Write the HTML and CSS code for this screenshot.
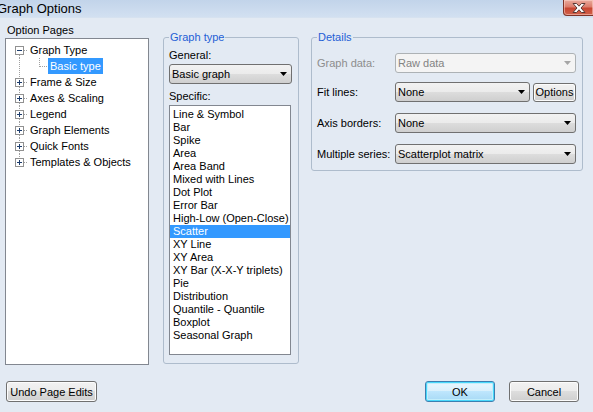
FILE: index.html
```html
<!DOCTYPE html>
<html>
<head>
<meta charset="utf-8">
<title>Graph Options</title>
<link rel="stylesheet" href="styles.css">
</head>
<body>
<div class="window">
  <div class="titlebar">
    <span class="title">Graph Options</span>
    <div class="close">
      <svg width="16" height="12" viewBox="0 0 16 12"><path d="M2 1.5 L5.5 1.5 L8 4.2 L10.5 1.5 L14 1.5 L10 6 L14 10.5 L10.5 10.5 L8 7.8 L5.5 10.5 L2 10.5 L6 6 Z" fill="#fff" stroke="#5a3a36" stroke-width="1" stroke-linejoin="round"/></svg>
    </div>
  </div>

  <div class="content">
    <div class="pages">
      <div class="pages-label">Option Pages</div>
      <div class="tree">
        <div class="node">
          <svg class="conn" width="22" height="16" viewBox="0 0 22 16"><path d="M13.5 13 V16" class="dot"/><path d="M18 8.5 H22" class="dot"/><rect x="9.5" y="4.5" width="8" height="8" class="box"/><path d="M11 8.5 H16" class="sign"/></svg>
          <span class="tlabel">Graph Type</span>
        </div>
        <div class="node">
          <svg class="conn" width="42" height="16" viewBox="0 0 42 16"><path d="M13.5 0 V16" class="dot"/><path d="M33.5 0 V9" class="dot"/><path d="M34 8.5 H42" class="dot"/></svg>
          <span class="tlabel sel">Basic type</span>
        </div>
        <div class="node">
          <svg class="conn" width="22" height="16" viewBox="0 0 22 16"><path d="M13.5 0 V4 M13.5 13 V16" class="dot"/><path d="M18 8.5 H22" class="dot"/><rect x="9.5" y="4.5" width="8" height="8" class="box"/><path d="M11 8.5 H16 M13.5 6 V11" class="sign"/></svg>
          <span class="tlabel">Frame &amp; Size</span>
        </div>
        <div class="node">
          <svg class="conn" width="22" height="16" viewBox="0 0 22 16"><path d="M13.5 0 V4 M13.5 13 V16" class="dot"/><path d="M18 8.5 H22" class="dot"/><rect x="9.5" y="4.5" width="8" height="8" class="box"/><path d="M11 8.5 H16 M13.5 6 V11" class="sign"/></svg>
          <span class="tlabel">Axes &amp; Scaling</span>
        </div>
        <div class="node">
          <svg class="conn" width="22" height="16" viewBox="0 0 22 16"><path d="M13.5 0 V4 M13.5 13 V16" class="dot"/><path d="M18 8.5 H22" class="dot"/><rect x="9.5" y="4.5" width="8" height="8" class="box"/><path d="M11 8.5 H16 M13.5 6 V11" class="sign"/></svg>
          <span class="tlabel">Legend</span>
        </div>
        <div class="node">
          <svg class="conn" width="22" height="16" viewBox="0 0 22 16"><path d="M13.5 0 V4 M13.5 13 V16" class="dot"/><path d="M18 8.5 H22" class="dot"/><rect x="9.5" y="4.5" width="8" height="8" class="box"/><path d="M11 8.5 H16 M13.5 6 V11" class="sign"/></svg>
          <span class="tlabel">Graph Elements</span>
        </div>
        <div class="node">
          <svg class="conn" width="22" height="16" viewBox="0 0 22 16"><path d="M13.5 0 V4 M13.5 13 V16" class="dot"/><path d="M18 8.5 H22" class="dot"/><rect x="9.5" y="4.5" width="8" height="8" class="box"/><path d="M11 8.5 H16 M13.5 6 V11" class="sign"/></svg>
          <span class="tlabel">Quick Fonts</span>
        </div>
        <div class="node">
          <svg class="conn" width="22" height="16" viewBox="0 0 22 16"><path d="M13.5 0 V4" class="dot"/><path d="M18 8.5 H22" class="dot"/><rect x="9.5" y="4.5" width="8" height="8" class="box"/><path d="M11 8.5 H16 M13.5 6 V11" class="sign"/></svg>
          <span class="tlabel">Templates &amp; Objects</span>
        </div>
      </div>
    </div>

    <div class="group group-type">
      <div class="gtitle"><span>Graph type</span></div>
      <div class="flabel first">General:</div>
      <div class="combo">
        <span class="ctext">Basic graph</span>
        <svg class="arrow" width="7" height="4" viewBox="0 0 7 4"><path d="M0 0 H7 L3.5 4 Z"/></svg>
      </div>
      <div class="flabel second">Specific:</div>
      <div class="list">
        <div class="item">Line &amp; Symbol</div>
        <div class="item">Bar</div>
        <div class="item">Spike</div>
        <div class="item">Area</div>
        <div class="item">Area Band</div>
        <div class="item">Mixed with Lines</div>
        <div class="item">Dot Plot</div>
        <div class="item">Error Bar</div>
        <div class="item">High-Low (Open-Close)</div>
        <div class="item sel">Scatter</div>
        <div class="item">XY Line</div>
        <div class="item">XY Area</div>
        <div class="item">XY Bar (X-X-Y triplets)</div>
        <div class="item">Pie</div>
        <div class="item">Distribution</div>
        <div class="item">Quantile - Quantile</div>
        <div class="item">Boxplot</div>
        <div class="item">Seasonal Graph</div>
      </div>
    </div>

    <div class="group group-details">
      <div class="gtitle"><span>Details</span></div>
      <div class="drow r1">
        <span class="dlabel disabled">Graph data:</span>
        <div class="combo disabled">
          <span class="ctext">Raw data</span>
          <svg class="arrow" width="7" height="4" viewBox="0 0 7 4"><path d="M0 0 H7 L3.5 4 Z"/></svg>
        </div>
      </div>
      <div class="drow r2">
        <span class="dlabel">Fit lines:</span>
        <div class="combo">
          <span class="ctext">None</span>
          <svg class="arrow" width="7" height="4" viewBox="0 0 7 4"><path d="M0 0 H7 L3.5 4 Z"/></svg>
        </div>
        <button class="btn options">Options</button>
      </div>
      <div class="drow r3">
        <span class="dlabel">Axis borders:</span>
        <div class="combo">
          <span class="ctext">None</span>
          <svg class="arrow" width="7" height="4" viewBox="0 0 7 4"><path d="M0 0 H7 L3.5 4 Z"/></svg>
        </div>
      </div>
      <div class="drow r4">
        <span class="dlabel">Multiple series:</span>
        <div class="combo">
          <span class="ctext">Scatterplot matrix</span>
          <svg class="arrow" width="7" height="4" viewBox="0 0 7 4"><path d="M0 0 H7 L3.5 4 Z"/></svg>
        </div>
      </div>
    </div>
  </div>

  <div class="footer">
    <button class="btn undo">Undo Page Edits</button>
    <div class="actions">
      <button class="btn ok">OK</button>
      <button class="btn cancel">Cancel</button>
    </div>
  </div>
</div>
</body>
</html>
```

FILE: styles.css
```css
* { box-sizing: border-box; }

html, body {
  margin: 0;
  padding: 0;
  background: #e3eaf3;
}

body {
  font-family: "Liberation Sans", Arial, sans-serif;
  font-size: 11px;
  color: #000;
}

.window {
  width: 593px;
  height: 412px;
  overflow: hidden;
  background: #e3eaf3;
  display: flex;
  flex-direction: column;
}

/* title bar */
.titlebar {
  height: 18px;
  flex: none;
  display: flex;
  align-items: flex-start;
  justify-content: space-between;
  background: linear-gradient(#c2d4ea, #d2e0f1);
  border-bottom: 1px solid #d6e2f0;
}

.title {
  font-size: 13px;
  line-height: 17px;
  margin-left: -3px;
  color: #000;
}

.close {
  width: 31px;
  height: 16px;
  margin-right: -1px;
  border: 1px solid #7e3328;
  border-top: none;
  border-radius: 0 0 0 4px;
  background: linear-gradient(#e9aa9d 0%, #dc7d6c 45%, #c84632 55%, #d0614a 100%);
  box-shadow: inset 0 0 0 1px rgba(255, 220, 210, 0.5);
  display: flex;
  align-items: center;
  justify-content: center;
}

/* main content */
.content {
  height: 363px;
  flex: none;
  display: flex;
  align-items: flex-start;
  padding: 4px 0 0 5px;
}

.pages {
  width: 144px;
  margin-right: 14px;
  flex: none;
}

.pages-label {
  height: 16px;
  line-height: 16px;
  padding-left: 2px;
}

.tree {
  height: 327px;
  border: 1px solid #828790;
  background: #fff;
  padding-top: 3px;
}

.node {
  height: 16px;
  display: flex;
  align-items: center;
}

.conn {
  flex: none;
  display: block;
}

.conn .dot {
  stroke: #a0a0a0;
  stroke-width: 1;
  stroke-dasharray: 1 1;
  fill: none;
}

.conn .box {
  fill: #fff;
  stroke: #919191;
  stroke-width: 1;
}

.conn .sign {
  stroke: #1c3c6c;
  stroke-width: 1;
  fill: none;
}

.tlabel {
  height: 16px;
  line-height: 16px;
  padding: 0 2px;
  white-space: nowrap;
}

.tlabel.sel {
  background: #3399ff;
  color: #fff;
}

/* group boxes */
.group {
  flex: none;
  margin-top: 15px;
  border: 1px solid #aebccc;
  border-radius: 3px;
}

.group-type {
  width: 136px;
  height: 327px;
  margin-right: 12px;
  padding: 0 6px 0 5px;
}

.group-details {
  width: 272px;
  height: 134px;
  padding: 0 6px 0 5px;
}

.gtitle {
  height: 16px;
  line-height: 16px;
  margin-top: -9px;
}

.gtitle span {
  display: inline-block;
  padding: 0 1px;
  background: #e3eaf3;
  color: #1f5fd6;
}

.flabel {
  height: 16px;
  line-height: 16px;
}

.flabel.first { margin-top: 2px; }
.flabel.second { margin-top: 4px; }

/* combo */
.combo {
  height: 20px;
  border: 1px solid #707070;
  border-radius: 3px;
  background: linear-gradient(#f2f2f2 0%, #ebebeb 50%, #dddddd 50%, #cfcfcf 100%);
  display: flex;
  align-items: center;
  justify-content: space-between;
  padding: 0 4px 0 2px;
}

.group-type .combo {
  margin-top: 1px;
}

.combo .ctext {
  white-space: nowrap;
  line-height: 16px;
}

.combo .arrow {
  flex: none;
  display: block;
}

.combo .arrow path { fill: #000; }

.combo.disabled {
  border-color: #adb2b5;
  background: #f4f4f4;
  color: #838383;
}

.combo.disabled .arrow path { fill: #a6a6a6; }

/* list */
.list {
  margin-top: 1px;
  margin-right: 1px;
  height: 250px;
  border: 1px solid #828790;
  background: #fff;
  padding-top: 2px;
}

.item {
  height: 13px;
  line-height: 13px;
  padding-left: 3px;
  white-space: nowrap;
}

.item.sel {
  background: #3399ff;
  color: #fff;
}

/* details rows */
.drow {
  display: flex;
  align-items: center;
  height: 20px;
}

.drow.r1 { margin-top: 8px; }
.drow.r2 { margin-top: 9px; }
.drow.r3 { margin-top: 11px; }
.drow.r4 { margin-top: 11px; }

.dlabel {
  width: 78px;
  flex: none;
  white-space: nowrap;
}

.dlabel.disabled { color: #8d8d8d; }

.drow .combo { flex: 1; }

/* buttons */
.btn {
  font-family: "Liberation Sans", Arial, sans-serif;
  font-size: 11px;
  color: #000;
  height: 21px;
  border: 1px solid #707070;
  border-radius: 3px;
  background: linear-gradient(#f2f2f2 0%, #ebebeb 50%, #dddddd 50%, #cfcfcf 100%);
  box-shadow: inset 0 0 0 1px #fcfcfc;
  padding: 0;
  margin: 0;
}

.btn.options {
  width: 43px;
  height: 19px;
  margin-left: 3px;
  flex: none;
}

.footer {
  height: 21px;
  flex: none;
  display: flex;
  justify-content: space-between;
  padding: 0 14px 0 6px;
}

.btn.undo { width: 91px; }

.actions {
  display: flex;
  gap: 14px;
}

.btn.ok, .btn.cancel { width: 70px; }

.btn.ok {
  border-color: #3c7fb1;
  box-shadow: inset 0 0 0 1px #48d8fb, inset 0 0 0 2px #c4eefb;
  background: linear-gradient(#eaf6fd 0%, #d9f0fc 50%, #bee6fd 50%, #a7d9f5 100%);
}
```
